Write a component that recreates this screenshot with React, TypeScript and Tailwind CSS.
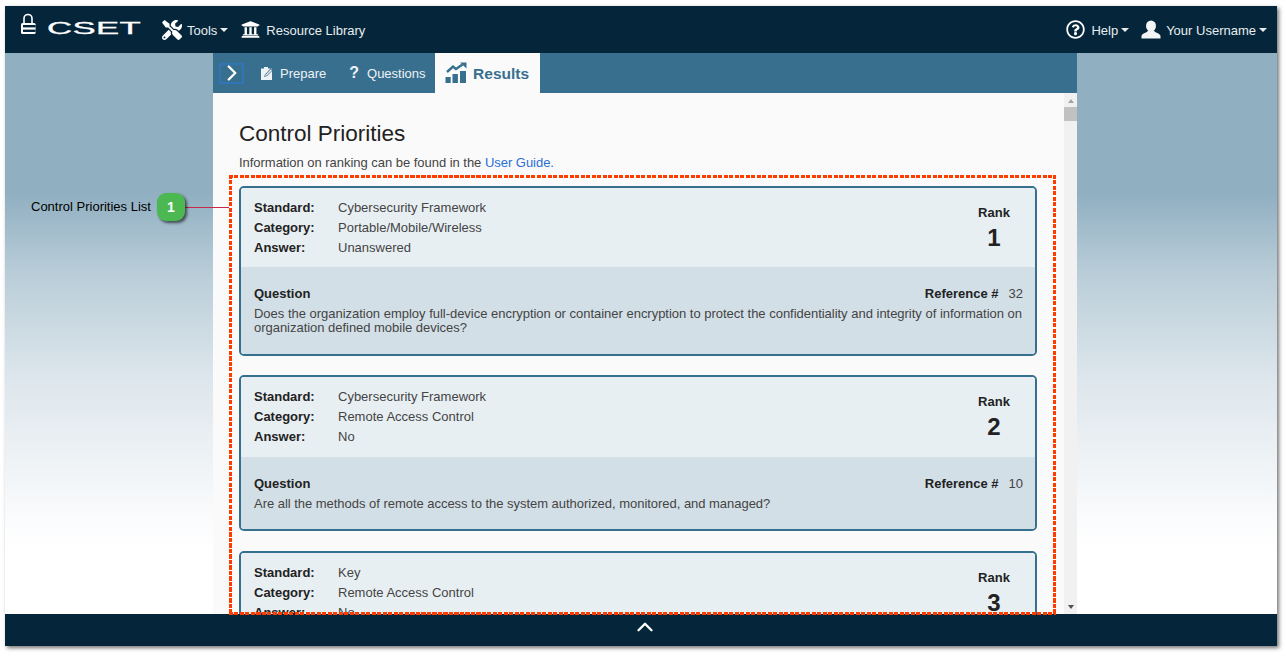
import { ChevronRight, ChevronUp } from "lucide-react";
import { FaTools, FaUniversity, FaRegQuestionCircle } from "react-icons/fa";

const font = "[font-family:'Liberation_Sans',Arial,sans-serif]";

function Caret() {
  return <span className="ml-[3px] inline-block border-x-[4px] border-t-[4px] border-x-transparent border-t-[#e8edf0]" />;
}

function Logo() {
  return (
    <div className="flex items-center">
      <svg width="20" height="24" viewBox="0 0 20 24" className="-mt-[9px] ml-[13px]">
        <path d="M6 10V5.5a4 4 0 0 1 8 0V10" fill="none" stroke="#fff" strokeWidth="1.6" />
        <rect x="3" y="10" width="14.6" height="11" rx="1.5" fill="#fff" />
        <rect x="5" y="12" width="12.6" height="2.4" fill="#05263a" />
        <rect x="5" y="16.6" width="12.6" height="2.4" fill="#05263a" />
      </svg>
      <span className="-mt-[2px] ml-[9px] w-[94px] origin-left scale-x-[2.1] text-[16.5px] leading-none tracking-[0.2px] text-white [-webkit-text-stroke:0.3px_white]">CSET</span>
    </div>
  );
}

function UserIcon() {
  return (
    <svg width="20" height="20" viewBox="0 0 20 20" fill="#f2f4f6" className="ml-[12px]">
      <ellipse cx="10" cy="6" rx="5" ry="5.6" />
      <path d="M7 10.5 C6.5 13 1 13 0.5 16 V18.5 H19.5 V16 C19 13 13.5 13 13 10.5 Z" />
    </svg>
  );
}

function PrepareIcon() {
  return (
    <svg width="14" height="15" viewBox="0 0 14 15" className="ml-[16px]">
      <path d="M1 2.5 H4 V1 H8 V2.5 H12 V14 H1 Z" fill="#eef2f5" />
      <path d="M4 11 L5 8.5 L11 2 L13 4 L7 10 Z" fill="#386f8f" />
      <path d="M5 10.2 L5.6 8.7 L11 3.2 L12 4.2 L6.5 9.6 Z" fill="#eef2f5" />
    </svg>
  );
}

function ResultsIcon() {
  return (
    <svg width="22" height="22" viewBox="0 0 22 22" fill="#386f8f">
      <rect x="0.5" y="15" width="5.2" height="6" />
      <rect x="7.5" y="12" width="5.4" height="9" />
      <rect x="15" y="9" width="6" height="12" />
      <path d="M2 10 L8 4.5 L11 7 L17.5 2.5" fill="none" stroke="#386f8f" strokeWidth="2.4" />
      <path d="M15 0.5 H21.5 V6.5 Z" />
    </svg>
  );
}

function Row({ label, value }: { label: string; value: string }) {
  return (
    <div className="flex">
      <b className="w-[84px] text-[#222]">{label}</b>
      <span>{value}</span>
    </div>
  );
}

function Card({ standard, category, answer, rank, reference, question, second }: { standard: string; category: string; answer: string; rank: number; reference?: number; question?: string; second?: boolean }) {
  return (
    <div className={`mr-[27px] ml-[26px] shrink-0 overflow-hidden rounded-[5px] border-2 border-[#35708f] ${second ? "mb-[20px]" : "mb-[19px]"}`}>
      <div className={`flex justify-between bg-[#e8eff3] pt-[10px] pr-[25px] pl-[13px] ${second ? "pb-[10px]" : "pb-[9px]"}`}>
        <div className="text-[13px] leading-[20px] text-[#444]">
          <Row label="Standard:" value={standard} />
          <Row label="Category:" value={category} />
          <Row label="Answer:" value={answer} />
        </div>
        <div className="flex w-[32px] flex-col items-center pt-[5px] text-[#222]">
          <b className="text-[13px] leading-[20px]">Rank</b>
          <b className="text-[24px] leading-[30px]">{rank}</b>
        </div>
      </div>
      {question && (
        <div className={`bg-[#d3dfe7] px-[13px] pt-[17px] ${second ? "pb-[18px]" : "pb-[19px]"}`}>
          <div className="-mr-[1px] flex justify-between text-[13px] leading-[20px] text-[#222]">
            <b>Question</b>
            <span>
              <b className="mr-[10px]">Reference #</b>
              <span className="text-[#444]">{reference}</span>
            </span>
          </div>
          <p className="mt-[3px] text-justify text-[13px] leading-[14px] tracking-[-0.03px] text-[#444]">{question}</p>
        </div>
      )}
    </div>
  );
}

export default function App() {
  return (
    <div className={`relative h-[655px] w-[1285px] overflow-hidden bg-white pt-[6px] pl-[5px] ${font}`}>
      <div className="flex h-[640px] w-[1272px] flex-col shadow-[2px_2px_4px_rgba(0,0,0,0.55)]">
        <header className="flex h-[47px] shrink-0 items-center justify-between bg-[#05263a] text-[13px] text-[#e8edf0]">
          <div className="flex items-center">
            <Logo />
            <div className="ml-[21px] flex items-center">
              <FaTools className="h-[20px] w-[20px] text-white" />
              <span className="mt-[2px] ml-[5px]">Tools</span>
              <Caret />
            </div>
            <div className="ml-[13px] flex items-center">
              <FaUniversity className="h-[19px] w-[19px] text-white" />
              <span className="mt-[2px] ml-[6px]">Resource Library</span>
            </div>
          </div>
          <div className="mr-[10px] flex items-center">
            <FaRegQuestionCircle className="h-[19px] w-[19px] text-white" />
            <span className="mt-[2px] ml-[6px]">Help</span>
            <Caret />
            <UserIcon />
            <span className="mt-[2px] ml-[5px]">Your Username</span>
            <Caret />
          </div>
        </header>
        <main className="flex min-h-0 flex-1 bg-[linear-gradient(180deg,#90afc1_0px,#90afc1_140px,#b9cdd8_220px,#dde6ec_325px,#fbfcfd_470px,#ffffff_500px)] pl-[208px]">
          <div className="flex h-full w-[864px] flex-col">
            <nav className="flex h-[40px] shrink-0 items-center bg-[#386f8f] text-[13px] text-[#eef2f5]">
              <div className="ml-[6px] flex h-[21px] w-[25px] items-center justify-center rounded-[1px] border-2 border-[#2f75b8]">
                <ChevronRight className="h-[26px] w-[26px] shrink-0 text-white" strokeWidth={2.2} />
              </div>
              <PrepareIcon />
              <span className="mt-[1px] ml-[6px]">Prepare</span>
              <b className="ml-[23px] text-[16px]">?</b>
              <span className="mt-[1px] ml-[8px]">Questions</span>
              <div className="ml-[9px] flex h-full w-[105px] items-center justify-center bg-[#fafafa] text-[15.5px] font-bold text-[#386f8f]">
                <ResultsIcon />
                <span className="mt-[1px] ml-[6px]">Results</span>
              </div>
            </nav>
            <div className="flex min-h-0 flex-1 bg-[#fafafa]">
              <div className="min-w-0 flex-1 overflow-hidden">
                <h1 className="mt-[27px] ml-[26px] text-[22.5px] leading-[28px] text-[#222]">Control Priorities</h1>
                <p className="mt-[5px] mb-[13px] ml-[26px] text-[13px] leading-[20px] tracking-[-0.03px] text-[#444]">
                  Information on ranking can be found in the <span className="text-[#2a6fd6]">User Guide.</span>
                </p>
                <Card standard="Cybersecurity Framework" category="Portable/Mobile/Wireless" answer="Unanswered" rank={1} reference={32} question="Does the organization employ full-device encryption or container encryption to protect the confidentiality and integrity of information on organization defined mobile devices?" />
                <Card second standard="Cybersecurity Framework" category="Remote Access Control" answer="No" rank={2} reference={10} question="Are all the methods of remote access to the system authorized, monitored, and managed?" />
                <Card standard="Key" category="Remote Access Control" answer="No" rank={3} />
              </div>
              <div className="flex w-[13px] shrink-0 flex-col items-center bg-[#f1f1f1] pt-[6px]">
                <span className="border-x-[3.5px] border-b-[4px] border-x-transparent border-b-[#a3a3a3]" />
                <span className="mt-[4px] h-[14px] w-full bg-[#c1c1c1]" />
                <span className="mt-auto mb-[5px] border-x-[3.5px] border-t-[4px] border-x-transparent border-t-[#505050]" />
              </div>
            </div>
          </div>
        </main>
        <footer className="flex h-[32px] shrink-0 items-center justify-center bg-[#05263a] pb-[6px] pl-[8px]">
          <ChevronUp className="h-[26px] w-[26px] text-white" strokeWidth={2.2} />
        </footer>
      </div>

      <div className="absolute top-[175px] left-[229px] h-[440px] w-[827px] bg-[repeating-linear-gradient(90deg,#ff3c00_0_4px,transparent_4px_5.5px),repeating-linear-gradient(90deg,#ff3c00_0_4px,transparent_4px_5.5px),repeating-linear-gradient(180deg,#ff3c00_0_4px,transparent_4px_5.5px),repeating-linear-gradient(180deg,#ff3c00_0_4px,transparent_4px_5.5px)] bg-[size:100%_3px,100%_3px,3px_100%,3px_100%] bg-[position:0_0,0_100%,0_0,100%_0] bg-no-repeat" />
      <div className="absolute top-[207px] left-[185px] h-px w-[44px] bg-[#c8264a]" />
      <div className="absolute top-[193px] left-[157px] flex h-[28px] w-[28px] items-center justify-center rounded-[9px] bg-[#4cb851] text-[14px] font-bold text-white shadow-[2px_2px_3px_rgba(0,0,0,0.6)]">1</div>
      <div className="absolute top-[199px] left-[31px] text-[13px] leading-[16px] text-black">Control Priorities List</div>
    </div>
  );
}
